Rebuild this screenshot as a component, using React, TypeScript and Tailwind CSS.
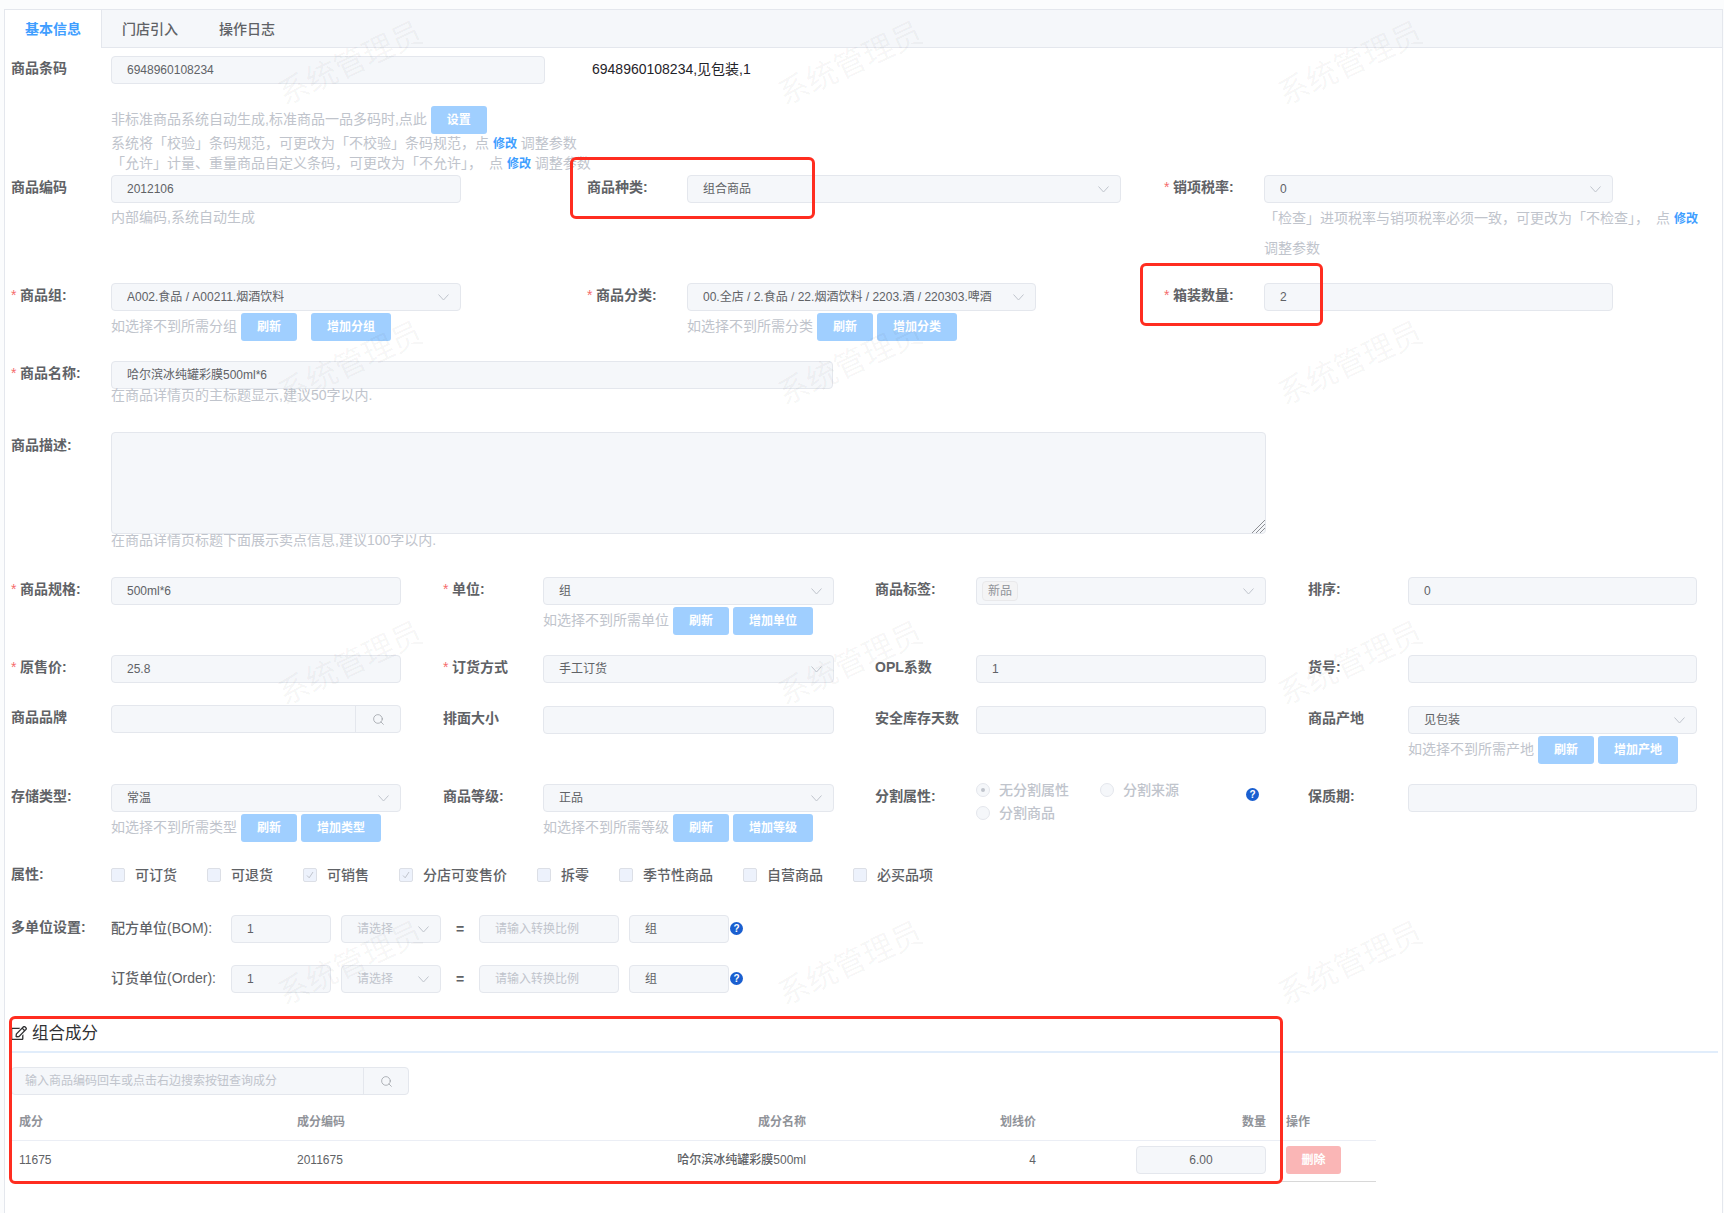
import { ReactNode } from "react"
import { Search } from "lucide-react"
import { FaRegEdit } from "react-icons/fa"

const box = "h-7 rounded-[4px] border border-[#e4e7ed] bg-[#f5f7fa] text-xs text-[#606266]"
const comma = "\uFF0C"

function Chevron() {
  return (
    <svg width="11" height="7" viewBox="0 0 11 7" fill="none" stroke="#c0c4cc" strokeWidth="1" className="shrink-0">
      <path d="M0.5 0.5 L5.5 6 L10.5 0.5" />
    </svg>
  )
}

function Input({ value, placeholder, className = "w-full" }: { value?: string; placeholder?: string; className?: string }) {
  return (
    <div className={`${box} ${className} flex items-center px-[15px] whitespace-nowrap`}>
      {value ?? <span className="text-[#c0c4cc]">{placeholder}</span>}
    </div>
  )
}

function Select({ value, placeholder, className = "w-full" }: { value?: string; placeholder?: string; className?: string }) {
  return (
    <div className={`${box} ${className} flex items-center justify-between pl-[15px] pr-[11px]`}>
      {value ? <span className="truncate">{value}</span> : <span className="text-[#c0c4cc]">{placeholder}</span>}
      <Chevron />
    </div>
  )
}

function SearchInput({ placeholder, className, buttonClass }: { placeholder?: string; className: string; buttonClass: string }) {
  return (
    <div className={`${box} ${className} flex items-center`}>
      <div className="flex-1 truncate pl-[13px] text-[#c0c4cc]">{placeholder}</div>
      <div className={`${buttonClass} flex h-full items-center justify-center border-l border-[#e4e7ed]`}>
        <Search size={13} strokeWidth={1.2} color="#8b8f96" />
      </div>
    </div>
  )
}

function Label({ text, required, className = "w-[100px]" }: { text: string; required?: boolean; className?: string }) {
  return (
    <div className={`${className} shrink-0 text-sm leading-6 font-bold whitespace-nowrap text-[#606266]`}>
      {required && <span className="inline-block w-[9px] font-normal text-[#f56c6c]">*</span>}
      {text}
    </div>
  )
}

function Btn({ children, className = "w-14 ml-1" }: { children: ReactNode; className?: string }) {
  return (
    <span className={`${className} inline-flex h-7 shrink-0 items-center justify-center rounded-[3px] bg-[#a0cfff] text-xs font-semibold text-white`}>
      {children}
    </span>
  )
}

function Hint({ text, add, gap = "w-20 ml-1" }: { text: string; add: string; gap?: string }) {
  return (
    <div className="mt-[2px] flex h-7 items-center text-sm whitespace-nowrap text-[#c0c4cc]">
      <span className="pb-[3px]">{text}</span>
      <Btn>刷新</Btn>
      <Btn className={gap}>{add}</Btn>
    </div>
  )
}

function Link() {
  return <span className="text-xs font-bold text-[#409eff]">修改</span>
}

function Help() {
  return (
    <svg width="13" height="13" viewBox="0 0 13 13" className="shrink-0">
      <circle cx="6.5" cy="6.5" r="6.5" fill="#1a5fd0" />
      <text x="6.5" y="10" textAnchor="middle" fontSize="10" fontWeight="700" fill="#fff">?</text>
    </svg>
  )
}

function Check({ label, checked }: { label: string; checked?: boolean }) {
  return (
    <div className="mr-[30px] flex items-center">
      <span className="flex h-[14px] w-[14px] items-center justify-center rounded-[2px] border border-[#dcdfe6] bg-[#edf2fc]">
        {checked && (
          <svg width="8" height="8" viewBox="0 0 8 8" fill="none" stroke="#c0c4cc" strokeWidth="1">
            <path d="M1 4.5 L3.2 6.8 L7 1" />
          </svg>
        )}
      </span>
      <span className="ml-[10px] text-sm font-medium text-[#606266]">{label}</span>
    </div>
  )
}

function Radio({ label, on }: { label: string; on?: boolean }) {
  return (
    <div className="mr-[31px] flex h-[23px] items-center">
      <span className="flex h-[14px] w-[14px] items-center justify-center rounded-full border border-[#e4e7ed] bg-[#f5f7fa]">
        {on && <span className="h-1 w-1 rounded-full bg-[#c0c4cc]" />}
      </span>
      <span className="ml-[9px] text-sm font-medium text-[#c0c4cc]">{label}</span>
    </div>
  )
}

function UnitRow({ title, label, rowClass }: { title?: string; label: string; rowClass: string }) {
  return (
    <div className={`${rowClass} flex items-start`}>
      <Label text={title ?? ""} />
      <div className="flex h-7 w-[120px] items-center pb-[3px] text-sm font-medium whitespace-nowrap text-[#606266]">{label}</div>
      <Input value="1" className="w-[100px]" />
      <Select placeholder="请选择" className="ml-[10px] w-[100px]" />
      <div className="flex h-7 w-[38px] items-center justify-center text-sm font-bold text-[#606266]">=</div>
      <Input placeholder="请输入转换比例" className="w-[140px]" />
      <Input value="组" className="ml-[10px] w-[100px]" />
      <div className="ml-[1px] pt-[7px]">
        <Help />
      </div>
    </div>
  )
}

const watermarks = Array.from({ length: 12 }, (_, i) => i)

export default function App() {
  return (
    <div
      className="relative h-[1213px] w-[1724px] overflow-hidden bg-[#fbfcfd] pt-[9px] pl-1"
      style={{ fontFamily: '"Liberation Sans", "Noto Sans CJK SC", sans-serif' }}
    >
      <div className="h-[1300px] w-[1719px] border border-[#e4e7ed] bg-white">
        {/* tabs */}
        <div className="flex h-[38px] border-b border-[#e4e7ed] bg-[#f5f7fa] text-sm font-medium text-[#606266]">
          <div className="flex h-[38px] w-[97px] items-center justify-center border-r border-[#e4e7ed] bg-white font-semibold text-[#409eff]">基本信息</div>
          <div className="ml-5 flex items-center">门店引入</div>
          <div className="ml-[41px] flex items-center">操作日志</div>
        </div>

        <div className="pt-2 pr-1 pl-[6px]">
          {/* 商品条码 */}
          <div className="flex h-7">
            <Label text="商品条码" />
            <Input value="6948960108234" className="w-[434px]" />
            <div className="ml-[47px] flex items-center pb-[2px] text-sm text-[#1f2329]">6948960108234,见包装,1</div>
          </div>
          <div className="mt-[22px] ml-[100px] text-sm whitespace-nowrap text-[#c0c4cc]">
            <div className="flex h-7 items-center">
              <span className="pb-[2px]">非标准商品系统自动生成,标准商品一品多码时,点此</span>
              <Btn>设置</Btn>
            </div>
            <div className="h-5 leading-[19px]">
              系统将「校验」条码规范{comma}可更改为「不校验」条码规范{comma}点 <Link /> 调整参数
            </div>
            <div className="h-5 leading-[19px]">
              「允许」计量、重量商品自定义条码{comma}可更改为「不允许」{comma}<span className="pl-[7px]">点</span> <Link /> 调整参数
            </div>
          </div>

          {/* 商品编码 */}
          <div className="mt-[1px] flex h-[108px]">
            <div className="flex w-[576px]">
              <Label text="商品编码" />
              <div className="w-[350px]">
                <Input value="2012106" />
                <div className="text-sm leading-7 text-[#c0c4cc]">内部编码,系统自动生成</div>
              </div>
            </div>
            <div className="flex w-[577px]">
              <Label text="商品种类:" />
              <Select value="组合商品" className="w-[434px]" />
            </div>
            <div className="flex">
              <Label text="销项税率:" required />
              <div className="w-[432px]">
                <Select value="0" className="w-[349px]" />
                <div className="text-sm leading-[30px] whitespace-nowrap text-[#c0c4cc]">
                  「检查」进项税率与销项税率必须一致{comma}可更改为「不检查」{comma}<span className="pl-[7px]">点</span> <Link />
                  <br />
                  调整参数
                </div>
              </div>
            </div>
          </div>

          {/* 商品组 */}
          <div className="flex h-[78px]">
            <div className="flex w-[576px]">
              <Label text="商品组:" required />
              <div className="w-[350px]">
                <Select value="A002.食品 / A00211.烟酒饮料" />
                <Hint text="如选择不到所需分组" add="增加分组" gap="w-20 ml-[14px]" />
              </div>
            </div>
            <div className="flex w-[577px]">
              <Label text="商品分类:" required />
              <div className="w-[349px]">
                <Select value="00.全店 / 2.食品 / 22.烟酒饮料 / 2203.酒 / 220303.啤酒" />
                <Hint text="如选择不到所需分类" add="增加分类" />
              </div>
            </div>
            <div className="flex">
              <Label text="箱装数量:" required />
              <Input value="2" className="w-[349px]" />
            </div>
          </div>

          {/* 商品名称 */}
          <div className="flex h-[71px]">
            <Label text="商品名称:" required />
            <div className="w-[722px]">
              <Input value="哈尔滨冰纯罐彩膜500ml*6" />
              <div className="text-sm leading-3 whitespace-nowrap text-[#c0c4cc]">在商品详情页的主标题显示,建议50字以内.</div>
            </div>
          </div>

          {/* 商品描述 */}
          <div className="flex h-[145px]">
            <Label text="商品描述:" className="w-[100px] pt-[1px]" />
            <div className="w-[1155px]">
              <div className="relative h-[102px] rounded-[4px] border border-[#e4e7ed] bg-[#f5f7fa]">
                <svg width="13" height="13" viewBox="0 0 13 13" stroke="#8d8f94" strokeWidth="1" className="absolute right-0 bottom-0">
                  <path d="M0 13 L13 0 M4 13 L13 4 M8 13 L13 8" />
                </svg>
              </div>
              <div className="text-sm leading-3 whitespace-nowrap text-[#c0c4cc]">在商品详情页标题下面展示卖点信息,建议100字以内.</div>
            </div>
          </div>

          {/* 商品规格 */}
          <div className="flex h-[78px]">
            <div className="flex w-[432px]">
              <Label text="商品规格:" required />
              <Input value="500ml*6" className="w-[290px]" />
            </div>
            <div className="flex w-[432px]">
              <Label text="单位:" required />
              <div className="w-[291px]">
                <Select value="组" />
                <Hint text="如选择不到所需单位" add="增加单位" />
              </div>
            </div>
            <div className="flex w-[433px]">
              <Label text="商品标签:" className="w-[101px]" />
              <div className={`${box} flex w-[290px] items-center justify-between pr-[11px] pl-[5px]`}>
                <span className="flex h-5 w-9 items-center justify-center rounded-[4px] border border-[#e9e9eb] bg-[#f4f4f5] text-[#909399]">新品</span>
                <Chevron />
              </div>
            </div>
            <div className="flex">
              <Label text="排序:" />
              <Input value="0" className="w-[289px]" />
            </div>
          </div>

          {/* 原售价 */}
          <div className="flex h-[50px]">
            <div className="flex w-[432px]">
              <Label text="原售价:" required />
              <Input value="25.8" className="w-[290px]" />
            </div>
            <div className="flex w-[432px]">
              <Label text="订货方式" required />
              <Select value="手工订货" className="w-[291px]" />
            </div>
            <div className="flex w-[433px]">
              <Label text="OPL系数" className="w-[101px]" />
              <Input value="1" className="w-[290px]" />
            </div>
            <div className="flex">
              <Label text="货号:" />
              <Input value="" className="w-[289px]" />
            </div>
          </div>

          {/* 商品品牌 */}
          <div className="flex h-[79px]">
            <div className="flex w-[432px]">
              <Label text="商品品牌" />
              <SearchInput className="w-[290px]" buttonClass="w-[45px]" />
            </div>
            <div className="flex w-[432px] pt-[1px]">
              <Label text="排面大小" />
              <Input value="" className="w-[291px]" />
            </div>
            <div className="flex w-[433px] pt-[1px]">
              <Label text="安全库存天数" className="w-[101px]" />
              <Input value="" className="w-[290px]" />
            </div>
            <div className="flex pt-[1px]">
              <Label text="商品产地" />
              <div className="w-[289px]">
                <Select value="见包装" />
                <Hint text="如选择不到所需产地" add="增加产地" />
              </div>
            </div>
          </div>

          {/* 存储类型 */}
          <div className="flex h-[77px]">
            <div className="flex w-[432px]">
              <Label text="存储类型:" />
              <div className="w-[290px]">
                <Select value="常温" />
                <Hint text="如选择不到所需类型" add="增加类型" />
              </div>
            </div>
            <div className="flex w-[432px]">
              <Label text="商品等级:" />
              <div className="w-[291px]">
                <Select value="正品" />
                <Hint text="如选择不到所需等级" add="增加等级" />
              </div>
            </div>
            <div className="flex w-[433px]">
              <Label text="分割属性:" className="w-[101px]" />
              <div className="flex w-[290px] justify-between pr-[7px]">
                <div className="-mt-[6px] flex h-[46px] w-[250px] flex-wrap">
                  <Radio label="无分割属性" on />
                  <Radio label="分割来源" />
                  <Radio label="分割商品" />
                </div>
                <div className="pt-1">
                  <Help />
                </div>
              </div>
            </div>
            <div className="flex">
              <Label text="保质期:" />
              <Input value="" className="w-[289px]" />
            </div>
          </div>

          {/* 属性 */}
          <div className="flex h-[54px]">
            <Label text="属性:" className="w-[100px] pt-[1px]" />
            <div className="flex h-7 items-center">
              <Check label="可订货" />
              <Check label="可退货" />
              <Check label="可销售" checked />
              <Check label="分店可变售价" checked />
              <Check label="拆零" />
              <Check label="季节性商品" />
              <Check label="自营商品" />
              <Check label="必买品项" />
            </div>
          </div>

          <UnitRow title="多单位设置:" label="配方单位(BOM):" rowClass="h-[50px]" />
          <UnitRow label="订货单位(Order):" rowClass="h-[48px]" />

          {/* 组合成分 */}
          <div className="flex h-[38px] items-center gap-[5px] pt-[2px] text-[16.5px] text-[#303133]">
            <FaRegEdit size={16} />
            组合成分
          </div>
          <div className="h-[2px] bg-[#e1edfb]" />

          <SearchInput
            placeholder="输入商品编码回车或点击右边搜索按钮查询成分"
            className="mt-[14px] w-[398px]"
            buttonClass="w-[45px]"
          />

          <div className="w-[1365px] text-xs">
            <div className="mt-[5px] grid h-[41px] grid-cols-[278px_260px_265px_230px_230px_102px] items-center border-b border-[#ebeef5] pt-[3px] font-bold text-[#909399]">
              <div className="px-2">成分</div>
              <div className="px-2">成分编码</div>
              <div className="px-2 text-right">成分名称</div>
              <div className="px-2 text-right">划线价</div>
              <div className="px-2 text-right">数量</div>
              <div className="px-3">操作</div>
            </div>
            <div className="grid h-[41px] grid-cols-[278px_260px_265px_230px_230px_102px] items-center border-b border-[#d8d8d8] pb-[2px] font-medium text-[#606266]">
              <div className="px-2">11675</div>
              <div className="px-2">2011675</div>
              <div className="px-2 text-right whitespace-nowrap">哈尔滨冰纯罐彩膜500ml</div>
              <div className="px-2 text-right">4</div>
              <div className="flex justify-end pr-2">
                <Input value="6.00" className="w-[130px] justify-center" />
              </div>
              <div className="px-3">
                <span className="flex h-7 w-[55px] items-center justify-center rounded-[3px] bg-[#fab6b6] font-semibold text-white">删除</span>
              </div>
            </div>
          </div>
        </div>
      </div>

      {/* watermark */}
      <div className="pointer-events-none absolute top-[-86px] left-[100px] grid grid-cols-[repeat(3,500px)] auto-rows-[300px] place-items-center">
        {watermarks.map((i) => (
          <span key={i} className="-rotate-[25deg] text-[31px] whitespace-nowrap text-black/[0.045]">
            系统管理员
          </span>
        ))}
      </div>

      {/* red highlight boxes */}
      <div className="absolute top-[157px] left-[570px] h-[62px] w-[245px] rounded-md border-[3px] border-[#ff2d20]" />
      <div className="absolute top-[263px] left-[1140px] h-[63px] w-[183px] rounded-md border-[3px] border-[#ff2d20]" />
      <div className="absolute top-[1016px] left-[9px] h-[168px] w-[1274px] rounded-md border-[3px] border-[#ff2d20]" />
    </div>
  )
}
